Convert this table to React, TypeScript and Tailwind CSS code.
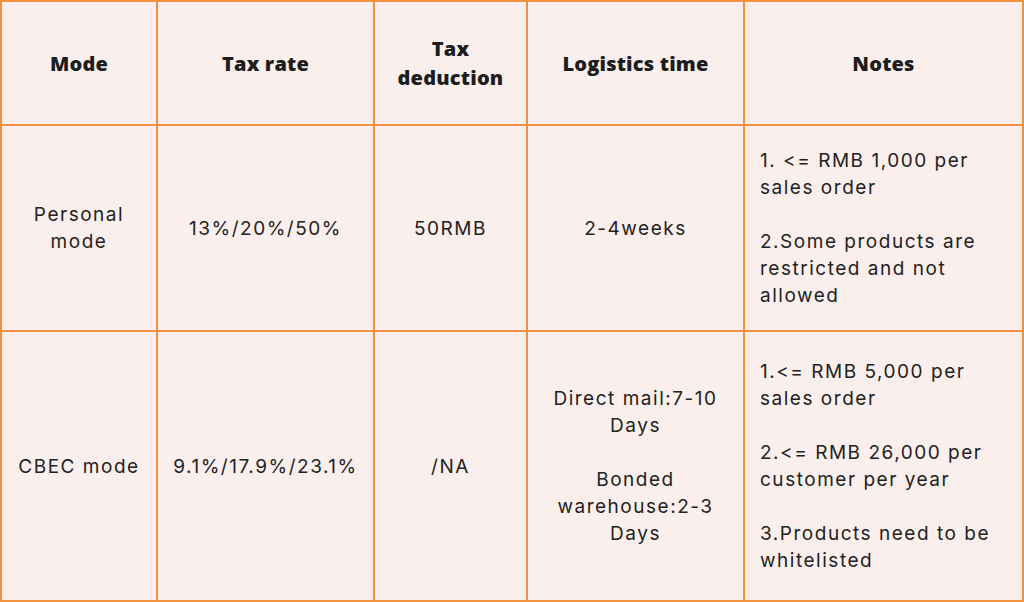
const head = "flex items-center justify-center text-center bg-[#faefec] px-4 font-['Open_Sans',sans-serif] font-extrabold text-[20px] leading-[29px] tracking-[0.01em] text-[#1d1d1d]";
const cell = "flex items-center justify-center text-center bg-[#faefec] px-4 text-[19px] leading-[27px] tracking-[0.08em] text-[#222]";
const note = "flex flex-col justify-center bg-[#faefec] pl-[15px] pr-3 text-[19px] leading-[27px] tracking-[0.08em] text-[#222]";

export default function App() {
  return (
    <div className="w-[1024px] h-[602px] font-['Inter',sans-serif]">
      <div className="grid h-full grid-cols-[154px_215px_151px_215px_1fr] grid-rows-[122px_204px_1fr] gap-[2px] border-2 border-[#f4923f] bg-[#f4923f]">
        <div className={head}>Mode</div>
        <div className={head}>Tax rate</div>
        <div className={head}>Tax<br />deduction</div>
        <div className={head}>Logistics time</div>
        <div className={head}>Notes</div>

        <div className={cell}>Personal<br />mode</div>
        <div className={cell}>13%/20%/50%</div>
        <div className={cell}>50RMB</div>
        <div className={cell}>2-4weeks</div>
        <div className={note}>
          <p>1. &lt;= RMB 1,000 per<br />sales order</p>
          <p className="mt-[27px]">2.Some products are<br />restricted and not<br />allowed</p>
        </div>

        <div className={cell}>CBEC mode</div>
        <div className={cell}>9.1%/17.9%/23.1%</div>
        <div className={cell}>/NA</div>
        <div className={cell + " flex-col"}>
          <p>Direct mail:7-10<br />Days</p>
          <p className="mt-[27px]">Bonded<br />warehouse:2-3<br />Days</p>
        </div>
        <div className={note}>
          <p>1.&lt;= RMB 5,000 per<br />sales order</p>
          <p className="mt-[27px]">2.&lt;= RMB 26,000 per<br />customer per year</p>
          <p className="mt-[27px]">3.Products need to be<br />whitelisted</p>
        </div>
      </div>
    </div>
  );
}
